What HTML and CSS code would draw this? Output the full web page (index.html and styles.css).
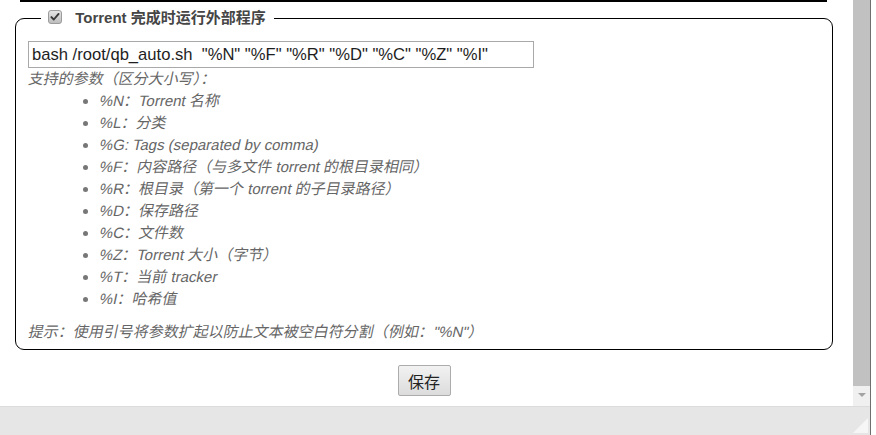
FILE: index.html
```html
<!DOCTYPE html>
<html lang="zh-CN">
<head>
<meta charset="utf-8">
<title>Torrent 完成时运行外部程序</title>
<link rel="stylesheet" href="styles.css">
</head>
<body>
<div class="frame">
  <div class="window">
    <div class="viewport">
      <div class="content">
        <div class="prev-edge"></div>
        <fieldset class="panel">
          <legend class="panel-legend">
            <span class="check" role="checkbox" aria-checked="true">
              <svg width="14" height="14" viewBox="0 0 14 14">
                <defs>
                  <linearGradient id="cg" x1="0" y1="0" x2="0" y2="1">
                    <stop offset="0" stop-color="#e6e6e6"/>
                    <stop offset="1" stop-color="#bcbcbc"/>
                  </linearGradient>
                </defs>
                <rect x="0.5" y="0.5" width="13" height="13" rx="2.5" fill="url(#cg)" stroke="#9c9c9c"/>
                <path d="M3.4 7.1 L5.8 9.5 L10.6 3.9" fill="none" stroke="#383838" stroke-width="1.9" stroke-linecap="round" stroke-linejoin="round"/>
              </svg>
            </span>
            <span class="legend-text">Torrent 完成时运行外部程序</span>
          </legend>
          <input class="cmd" type="text" value='bash /root/qb_auto.sh  "%N" "%F" "%R" "%D" "%C" "%Z" "%I"'>
          <div class="note"><span class="it">支持的参数（区分大小写）：</span></div>
          <ul class="params">
            <li><span class="it">%N：Torrent 名称</span></li>
            <li><span class="it">%L：分类</span></li>
            <li><span class="it">%G: Tags (separated by comma)</span></li>
            <li><span class="it">%F：内容路径（与多文件 torrent 的根目录相同）</span></li>
            <li><span class="it">%R：根目录（第一个 torrent 的子目录路径）</span></li>
            <li><span class="it">%D：保存路径</span></li>
            <li><span class="it">%C：文件数</span></li>
            <li><span class="it">%Z：Torrent 大小（字节）</span></li>
            <li><span class="it">%T：当前 tracker</span></li>
            <li><span class="it">%I：哈希值</span></li>
          </ul>
          <div class="note hint"><span class="it">提示：使用引号将参数扩起以防止文本被空白符分割（例如："%N"）</span></div>
        </fieldset>
        <div class="actions">
          <button class="save" type="button">保存</button>
        </div>
      </div>
      <div class="vscroll">
        <div class="thumb"></div>
        <div class="arrow"><span class="tri"></span></div>
      </div>
    </div>
    <div class="footer"><span class="grip"></span></div>
  </div>
  <div class="edge"></div>
</div>
</body>
</html>
```
FILE: styles.css
```css
html, body {
  margin: 0;
  padding: 0;
  background: #ffffff;
}
body {
  width: 876px;
  height: 435px;
  overflow: hidden;
  font-family: "Liberation Sans", "Noto Sans CJK SC", sans-serif;
}
.frame {
  display: flex;
  width: 876px;
  height: 435px;
}
.window {
  width: 870px;
  display: flex;
  flex-direction: column;
}
.viewport {
  height: 406px;
  display: flex;
}
.content {
  width: 853px;
  background: #fff;
  overflow: hidden;
}
.prev-edge {
  height: 0;
  border-top: 2px solid #000;
  margin: 0 26px 0 20px;
}
.panel {
  margin: 6px 20px 0 15px;
  padding: 13px 12px 6px 12px;
  border: 1px solid #000;
  border-radius: 9px;
  min-width: 0;
}
.panel-legend {
  margin-left: 13px;
  padding: 0 8px 0 7px;
  height: 20px;
  line-height: 20px;
  font-size: 15px;
  font-weight: bold;
  color: #454545;
  white-space: nowrap;
}
.check {
  display: inline-block;
  width: 14px;
  height: 14px;
  vertical-align: -1px;
  margin-right: 9px;
}
.check svg {
  display: block;
}
.legend-text {
  vertical-align: top;
}
.cmd {
  display: block;
  box-sizing: border-box;
  width: 506px;
  height: 27px;
  margin: 0;
  padding: 0 3px;
  border: 1px solid #a9a9a9;
  font-family: "Liberation Sans", "Noto Sans CJK SC", sans-serif;
  font-size: 16.6px;
  color: #1e1e1e;
  background: #fff;
  outline: none;
}
.note {
  font-size: 15px;
  line-height: 22px;
  color: #666;
}
.it {
  display: inline-block;
  transform: skewX(-12deg);
  transform-origin: 0 70%;
  white-space: nowrap;
}
.params {
  margin: 0;
  padding-left: 71px;
  font-size: 15px;
  line-height: 22px;
  color: #666;
  list-style: disc;
}
.params li::marker {
  color: #777;
}
.hint {
  margin-top: 11px;
}
.actions {
  margin: 15px 20px 0 15px;
  text-align: center;
}
.save {
  width: 53px;
  height: 31px;
  padding: 0;
  border: 1px solid #acacac;
  border-radius: 2px;
  background: linear-gradient(#f2f2f2, #dcdcdc);
  font-family: "Noto Sans CJK SC", sans-serif;
  font-size: 16px;
  color: #222;
}
.vscroll {
  width: 17px;
  background: #f0f0f0;
  display: flex;
  flex-direction: column;
}
.thumb {
  height: 386px;
  background: #c1c1c1;
}
.arrow {
  flex: 1;
  display: flex;
  align-items: center;
  justify-content: center;
}
.tri {
  width: 0;
  height: 0;
  border-left: 4px solid transparent;
  border-right: 4px solid transparent;
  border-top: 4px solid #a3a3a3;
  margin-top: -2px;
}
.footer {
  flex: 1;
  background: #e6e6e6;
  border-top: 1px solid #dcdcdc;
  display: flex;
  justify-content: flex-end;
  align-items: flex-end;
}
.grip {
  width: 0;
  height: 0;
  border-left: 15px solid transparent;
  border-bottom: 15px solid #f6f6f6;
  margin: 0 2px 2px 0;
}
.edge {
  width: 6px;
  background: #fff;
  border-left: 1px solid #6e6e6e;
  box-sizing: border-box;
}
```
